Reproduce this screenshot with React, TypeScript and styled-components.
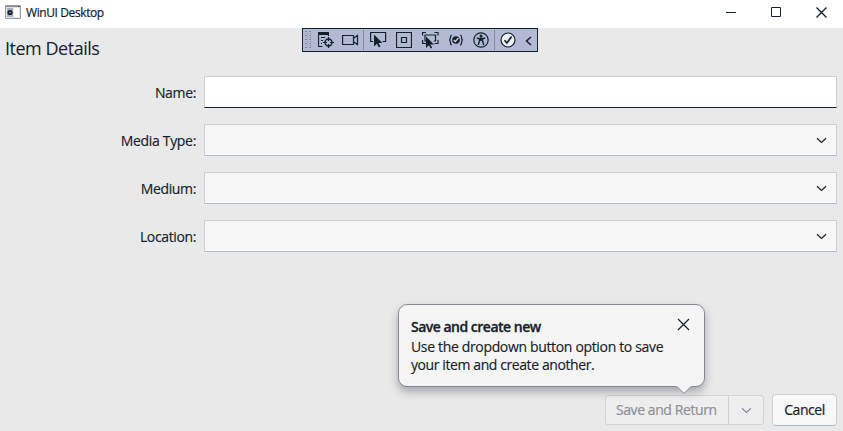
import React from "react";
import styled, { createGlobalStyle } from "styled-components";

const ink = "#14202b";
const face = '"Open Sans", "Noto Sans", sans-serif';

const GlobalStyle = createGlobalStyle`
  * { box-sizing: border-box; }
  body { margin: 0; background: #e9e9e9; overflow: hidden; }
  button { font: inherit; color: inherit; padding: 0; margin: 0; }
`;

const Window = styled.div`
  position: relative;
  display: flex;
  flex-direction: column;
  width: 843px;
  height: 431px;
  background: #e9e9e9;
  color: ${ink};
  font-family: ${face};
  font-size: 14px;
`;

const TitleBar = styled.header`
  display: flex;
  align-items: center;
  flex: none;
  height: 28px;
  padding-left: 5px;
  background: #fff;
`;

const AppTitle = styled.span`
  flex: 1;
  margin-left: 5px;
  padding-bottom: 2px;
  font-size: 12px;
  line-height: 16px;
  letter-spacing: -0.4px;
  -webkit-text-stroke: 0.2px ${ink};
`;

const AppIcon = styled.svg`
  width: 16px;
  height: 14px;
  margin-top: -4px;
`;

const WindowButton = styled.button`
  display: flex;
  align-items: center;
  justify-content: center;
  width: 45px;
  height: 24px;
  margin-bottom: 4px;
  border: 0;
  background: none;
  &:last-child { padding-left: 2px; }
`;

const Page = styled.main`
  display: flex;
  flex-direction: column;
  flex: 1;
  padding: 8px 6px 5px 5px;
`;

const Heading = styled.h1`
  margin: 0 0 16px;
  font-size: 18px;
  font-weight: 400;
  line-height: 24px;
  letter-spacing: -0.48px;
`;

const Form = styled.div`
  display: grid;
  grid-template-columns: 191px 1fr;
  grid-auto-rows: 32px;
  row-gap: 16px;
  column-gap: 8px;
`;

const Label = styled.label<{ $tracking: number }>`
  justify-self: end;
  padding-top: 7px;
  line-height: 20px;
  letter-spacing: ${(p) => p.$tracking}px;
  -webkit-text-stroke: 0.15px ${ink};
`;

const Field = styled.div<{ $select?: boolean }>`
  display: flex;
  align-items: center;
  justify-content: flex-end;
  padding-right: 9.5px;
  border: 1px solid #cfcfcf;
  border-bottom-color: ${(p) => (p.$select ? "#b0b8d2" : ink)};
  border-radius: 1px;
  background: ${(p) => (p.$select ? "#f7f7f7" : "#fff")};
`;

const Actions = styled.footer`
  display: flex;
  align-items: center;
  justify-content: flex-end;
  gap: 8px;
  margin-top: auto;
`;

const SplitButton = styled.div`
  display: flex;
  width: 159px;
  height: 30px;
  border: 1px solid #d2d2d2;
  border-radius: 3px;
  background: #eeeeee;
  color: #8c909a;
`;

const SplitMain = styled.button`
  width: 123px;
  border: 0;
  border-right: 1px solid #cfcfcf;
  background: none;
  line-height: 20px;
  letter-spacing: -0.42px;
  text-align: left;
  padding-left: 10px;
  white-space: nowrap;
  -webkit-text-stroke: 0.2px #8c909a;
`;

const SplitToggle = styled.button`
  display: flex;
  align-items: center;
  justify-content: center;
  flex: 1;
  border: 0;
  background: none;
`;

const CancelButton = styled.button`
  width: 65px;
  height: 32px;
  padding-bottom: 2px;
  border: 1px solid #cfcfcf;
  border-bottom-color: #b0b9c8;
  border-radius: 4px;
  background: #f8f8f8;
  letter-spacing: -0.45px;
  -webkit-text-stroke: 0.2px ${ink};
`;

const DebugBar = styled.div`
  position: absolute;
  top: 28px;
  left: 302px;
  display: flex;
  width: 236px;
  height: 24px;
  border: 1px solid ${ink};
  background: #b2bad3;
`;

const ToolIcon = styled.svg<{ $gap: number }>`
  flex: none;
  height: 22px;
  margin-left: ${(p) => p.$gap}px;
  fill: none;
  stroke: ${ink};
  stroke-width: 1.2;
`;

const Separator = styled.i<{ $gap: number }>`
  flex: none;
  width: 1px;
  height: 20px;
  margin: 1px 0 0 ${(p) => p.$gap}px;
  background: #85899a;
`;

const Tip = styled.aside`
  position: absolute;
  left: 398px;
  top: 304px;
  width: 307px;
  height: 83px;
  padding: 12px;
  border: 1px solid #858891;
  border-radius: 9px;
  background: #f5f5f5;
  box-shadow: 0 5px 9px rgba(60, 66, 82, 0.38);
  -webkit-text-stroke: 0.15px ${ink};
`;

const TipTitle = styled.strong`
  display: block;
  line-height: 20px;
  font-weight: 600;
  letter-spacing: -0.5px;
  -webkit-text-stroke: 0.3px ${ink};
`;

const TipText = styled.p<{ $tracking: number }>`
  margin: 0;
  padding-top: 1px;
  line-height: 18px;
  white-space: nowrap;
  letter-spacing: ${(p) => p.$tracking}px;
  & + & { padding-top: 0; }
`;

const TipClose = styled.button`
  position: absolute;
  top: 13px;
  right: 14px;
  display: flex;
  width: 13px;
  height: 13px;
  border: 0;
  background: none;
`;

const TipTail = styled.svg`
  position: absolute;
  left: 276px;
  top: 81px;
`;

const Chevron = ({ color = ink }: { color?: string }) => (
  <svg width="11" height="7" viewBox="0 0 11 7" fill="none" stroke={color} strokeWidth="1.2">
    <path d="M1 1.2l4.5 4.3L10 1.2" />
  </svg>
);

const fields = [
  { label: "Name:", select: false, tracking: -0.35 },
  { label: "Media Type:", select: true, tracking: -0.32 },
  { label: "Medium:", select: true, tracking: -0.35 },
  { label: "Location:", select: true, tracking: -0.37 },
];

const DebugTools = () => (
  <DebugBar>
    <ToolIcon $gap={2} width="7" viewBox="0 0 7 22">
      {[2, 4, 6, 8, 10, 12, 14, 16, 18].map((y, i) => (
        <path key={y} d={i % 2 ? `M2 ${y + 0.5}h1m2 0h1` : `M0 ${y + 0.5}h2m2 0h2`} stroke="#858891" strokeWidth="1" />
      ))}
    </ToolIcon>
    <ToolIcon $gap={6} width="16" viewBox="0 0 16 22">
      <path d="M0 4.500h11" strokeWidth="3" />
      <path d="M.5 5v12.500h4M10.500 6v1M3 8.500h4M3 11.500h2M3 14.500h1" />
      <circle cx="10.500" cy="13.500" r="3.500" strokeWidth="1.400" />
      <path d="M10.500 8v4M10.500 15v4M4.800 13.500H9M12 13.500H16" />
    </ToolIcon>
    <ToolIcon $gap={8} width="17" viewBox="0 0 17 22">
      <path d="M.6 6.500h10.900v9H.6zM12 9l3.500-2.500v9L12 13" />
    </ToolIcon>
    <Separator $gap={4} />
    <ToolIcon $gap={6} width="17" viewBox="0 0 17 22">
      <path d="M3 12.500H.6v-9h15v9h-3" />
      <path d="M4 5.500v12l3-2.700 1.700 3.500 1.800-.8-2-3.500h4z" fill={ink} stroke="none" />
    </ToolIcon>
    <ToolIcon $gap={9} width="16" viewBox="0 0 16 22">
      <path d="M.5 3.500h15v15H.5zM5.500 8.500h5v5h-5z" />
    </ToolIcon>
    <ToolIcon $gap={10} width="17" viewBox="0 0 17 22">
      <path d="M.6 6.500V3.500H4M12.500 3.500H16V6.500M.6 11v3.500H4M16 11v3.500h-3.500M4 12H3V6h10.500v6H12" />
      <path d="M4 7.500v11.500l3-2.700 1.700 3.200 1.500-.8-1.800-3.200h3.600z" fill={ink} stroke="none" />
    </ToolIcon>
    <ToolIcon $gap={10} width="14" viewBox="0 0 14 22">
      <path d="M3 6Q1.500 6 1.500 8t-1 3q1 1 1 3T3 16M11 6q1.500 0 1.500 2t1 3q-1 1-1 3T11 16" />
      <circle cx="7" cy="11" r="3.800" fill={ink} stroke="none" />
      <path d="M4.800 11l1.600 1.600 3-3.700" stroke="#e3e7f0" />
    </ToolIcon>
    <ToolIcon $gap={10} width="16" viewBox="0 0 16 22">
      <circle cx="8" cy="11" r="7.200" />
      <circle cx="8" cy="7" r="1.500" fill={ink} stroke="none" />
      <path d="M3.800 9l3 .9h2.400l3-.9" strokeWidth="1.400" />
      <path d="M6.500 9.500h3V12l1.300 4M6.500 9.500V12l-1.300 4M6.500 12L8 10.500 9.500 12" strokeWidth="1.400" />
    </ToolIcon>
    <Separator $gap={5} />
    <ToolIcon $gap={5} width="16" viewBox="0 0 16 22">
      <circle cx="8" cy="11" r="7" fill="#eef0f3" />
      <path d="M4.500 11.300l2.400 2.700 4.700-6.500" strokeWidth="1.700" />
    </ToolIcon>
    <ToolIcon $gap={9} width="7" viewBox="0 0 7 22">
      <path d="M6 8L1.500 12 6 16" strokeWidth="1.500" />
    </ToolIcon>
  </DebugBar>
);

export default function App() {
  return (
    <>
      <GlobalStyle />
      <Window>
        <TitleBar>
          <AppIcon viewBox="0 0 16 14">
            <path d="M.5.500h15v13H.5z" fill="#e4e6ea" stroke="#9a9da3" />
            <path d="M1 1.500h14" stroke="#858891" />
            <path d="M2 3h6v9H2z" fill="#aab0c0" />
            <path d="M9 3h5v9H9z" fill="#fff" />
            <circle cx="5" cy="7.500" r="2.600" fill={ink} />
            <circle cx="5" cy="7.500" r=".8" fill="#b8bcc8" />
            <path d="M13 1.500h2" stroke="#555b66" />
          </AppIcon>
          <AppTitle>WinUI Desktop</AppTitle>
          <WindowButton aria-label="Minimize">
            <svg width="10" height="11"><path d="M0 5.500h10" stroke={ink} /></svg>
          </WindowButton>
          <WindowButton aria-label="Maximize">
            <svg width="10" height="10"><path d="M.5.500h9v9h-9z" fill="none" stroke={ink} /></svg>
          </WindowButton>
          <WindowButton aria-label="Close">
            <svg width="11" height="11"><path d="M.5.500l10 10M10.500.500l-10 10" stroke={ink} strokeWidth="1.400" /></svg>
          </WindowButton>
        </TitleBar>
        <Page>
          <Heading>Item Details</Heading>
          <Form>
            {fields.map((f) => (
              <React.Fragment key={f.label}>
                <Label $tracking={f.tracking}>{f.label}</Label>
                <Field $select={f.select}>{f.select && <Chevron />}</Field>
              </React.Fragment>
            ))}
          </Form>
          <Actions>
            <SplitButton>
              <SplitMain>Save and Return</SplitMain>
              <SplitToggle aria-label="More save options"><Chevron color="#858b99" /></SplitToggle>
            </SplitButton>
            <CancelButton>Cancel</CancelButton>
          </Actions>
        </Page>
        <DebugTools />
        <Tip>
          <TipTitle>Save and create new</TipTitle>
          <TipText $tracking={-0.34}>Use the dropdown button option to save</TipText>
          <TipText $tracking={-0.41}>your item and create another.</TipText>
          <TipClose aria-label="Dismiss">
            <svg width="13" height="13"><path d="M1 1l11 11M12 1L1 12" stroke={ink} strokeWidth="1.200" /></svg>
          </TipClose>
          <TipTail width="18" height="9" viewBox="0 0 18 9">
            <path d="M0 0h18l-1 .5Q16 .8 15 1.500L9 7.500 3 1.500Q2 .5 0 .5z" fill="#f5f5f5" />
            <path d="M0 .5Q2 .5 3 1.500L9 7.500l6-6Q16 .5 18 .5" fill="none" stroke="#858891" />
          </TipTail>
        </Tip>
      </Window>
    </>
  );
}
